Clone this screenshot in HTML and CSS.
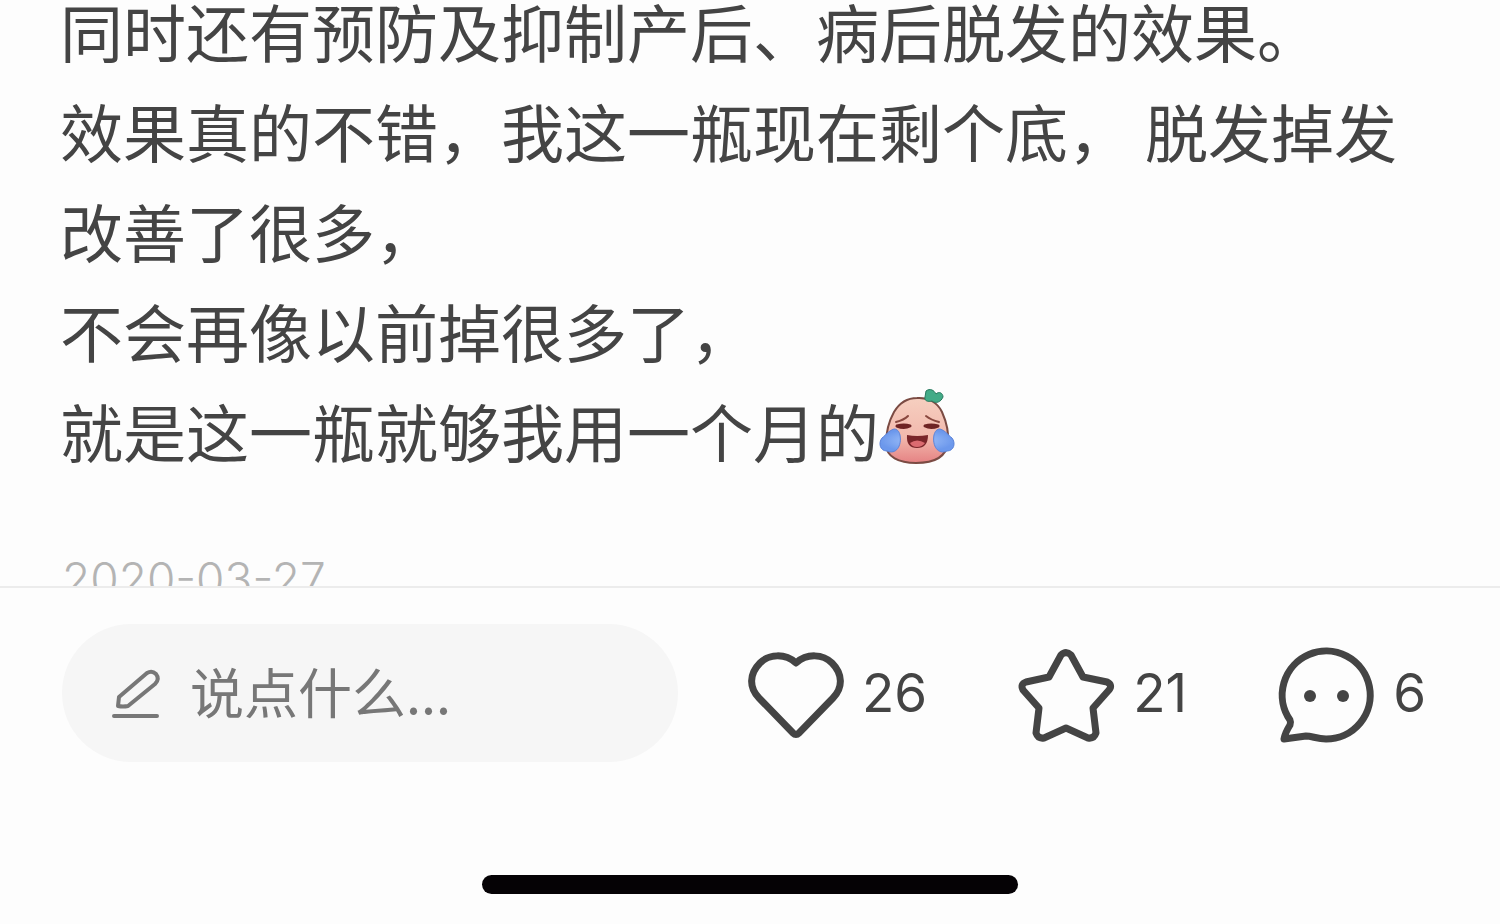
FILE: index.html
```html
<!DOCTYPE html>
<html lang="zh-CN">
<head>
    <meta charset="UTF-8">
    <meta name="viewport" content="width=device-width, initial-scale=1.0">
    <title>笔记详情</title>
    <link rel="stylesheet" href="styles.css">
</head>
<body>
    <main class="note">
        <div class="note-text">
            <p>同时还有预防及抑制产后、病后脱发的效果。</p>
            <p>效果真的不错，我这一瓶现在剩个底， 脱发掉发改善了很多，</p>
            <p>不会再像以前掉很多了，</p>
            <p>就是这一瓶就够我用一个月的<svg class="emoji" viewBox="0 0 76 76" role="img" aria-label="笑哭">
                <defs>
                    <linearGradient id="skin" x1="0" y1="0" x2="0" y2="1">
                        <stop offset="0" stop-color="#f6cfc0"/>
                        <stop offset="0.6" stop-color="#f2b9ad"/>
                        <stop offset="1" stop-color="#e58283"/>
                    </linearGradient>
                    <radialGradient id="tear">
                        <stop offset="0" stop-color="#a9c8fb"/>
                        <stop offset="1" stop-color="#6c98ec"/>
                    </radialGradient>
                </defs>
                <path d="M38 9C49 8 59 14 63 23C67 32 70 44 69 54C67 69 54 74 37 74C20 74 7 68 7 55C7 45 10 32 15 23C21 13 28 9 38 9Z" fill="url(#skin)" stroke="#7b4b43" stroke-width="2"/>
                <path d="M47 2C51-1 55 1 57 5C60 2 64 4 64 8C62 13 57 15 53 12C49 13 45 12 46 8Z" fill="#43ab87" stroke="#28785e" stroke-width="1"/>
                <path d="M17 33Q25 31 29 27M47 27Q52 31 60 33" fill="none" stroke="#89483f" stroke-width="2" stroke-linecap="round"/>
                <path d="M18 37Q25 35 31 37Q25 40 18 37ZM46 37Q52 35 59 37Q52 40 46 37Z" fill="#6e2424" stroke="#6e2424" stroke-width="3" stroke-linejoin="round"/>
                <path d="M28 46Q38 48 49 46Q49 59 38 59Q27 59 28 46Z" fill="#7a2529"/>
                <path d="M31 54Q38 49 46 54Q43 58 38 58Q33 58 31 54Z" fill="#db6b70"/>
                <path d="M15 40C9 42 7 46 3 49C-1 54 1 62 8 62C17 66 23 57 21 46C20 42 18 40 15 40ZM61 40C67 42 69 46 73 49C77 54 75 62 68 62C59 66 53 57 55 46C56 42 58 40 61 40Z" fill="url(#tear)" stroke="#5b83d8" stroke-width="1"/>
            </svg></p>
        </div>
        <time class="note-date" datetime="2020-03-27">2020-03-27</time>
    </main>

    <footer class="bottom-bar">
        <div class="toolbar">
            <label class="comment-box">
                <svg class="pen-icon" viewBox="0 0 48 50" aria-hidden="true">
                    <path d="M6 38L7 29L35 5Q40 2 44 6Q48 11 43 16L16 38Q11 39 6 38ZM2 48H45"/>
                </svg>
                <input type="text" placeholder="说点什么..." aria-label="说点什么">
            </label>
            <div class="actions">
                <button type="button" class="action" aria-label="点赞 26">
                    <svg class="action-icon" viewBox="0 0 96 96" aria-hidden="true">
                        <path d="M48 18C37 8 21 9 12 18C1 29 1 43 11 53L45 88Q48 91 51 88L85 53C95 43 95 29 84 18C75 9 59 8 48 18Z"/>
                    </svg>
                    <span>26</span>
                </button>
                <button type="button" class="action" aria-label="收藏 21">
                    <svg class="action-icon" viewBox="0 0 96 96" aria-hidden="true">
                        <path d="M42 10Q47 5 52 10L64 32L88 37Q94 40 90 45L74 63L77 88Q75 94 69 93L47 83L25 93Q19 94 17 88L20 63L4 45Q1 39 7 37L30 32Z"/>
                    </svg>
                    <span>21</span>
                </button>
                <button type="button" class="action" aria-label="评论 6">
                    <svg class="action-icon" viewBox="0 0 96 96" aria-hidden="true">
                        <path d="M11 75A44 44 0 1 1 47 94C38 94 33 91 27 91Q20 92 5 94Q6 88 11 80Q12 77 11 75Z"/>
                        <circle class="dot" cx="31" cy="51" r="6"/>
                        <circle class="dot" cx="64" cy="51" r="6"/>
                    </svg>
                    <span>6</span>
                </button>
            </div>
        </div>
        <div class="home-indicator"></div>
    </footer>
</body>
</html>
```

FILE: styles.css
```css
* {
    box-sizing: border-box;
}
body {
    display: flex;
    flex-direction: column;
    height: 100vh;
    margin: 0;
    overflow: hidden;
    background-color: #fdfdfd;
    color: #444;
    font-family: Inter, "Noto Sans CJK SC", sans-serif;
}

.note {
    flex: 1;
    min-height: 0;
    padding: 0 60px;
    overflow: hidden;
}
.note-text {
    margin-top: -20px;
    font-family: "Noto Sans CJK SC", sans-serif;
    font-size: 63px;
    line-height: 100px;
}
.note-text p {
    margin: 0;
}
.emoji {
    width: 76px;
    height: 76px;
    vertical-align: -8px;
}
.note-date {
    display: block;
    margin-top: 72px;
    padding-left: 2px;
    color: #b4b4b4;
    font-size: 46px;
    font-weight: 300;
    line-height: 54px;
}

/* Bottom bar */
.bottom-bar {
    padding-bottom: 30px;
    border-top: 2px solid #ececec;
}
.toolbar {
    display: flex;
    align-items: center;
    gap: 70px;
    padding: 36px 74px 0 62px;
}
.comment-box {
    display: flex;
    flex: 1;
    align-items: center;
    gap: 30px;
    min-width: 0;
    height: 138px;
    padding: 0 50px;
    border-radius: 69px;
    background-color: #f6f6f6;
}
.pen-icon {
    flex: none;
    width: 48px;
    height: 50px;
    overflow: visible;
    fill: none;
    stroke: #777;
    stroke-width: 4;
    stroke-linecap: round;
    stroke-linejoin: round;
}
.comment-box input {
    flex: 1;
    min-width: 0;
    height: 80px;
    padding: 0 0 6px;
    border: none;
    outline: none;
    background: none;
    color: #444;
    font-family: "Noto Sans CJK SC", sans-serif;
    font-size: 54px;
}
.comment-box input::placeholder {
    color: #777;
}
.actions {
    display: flex;
    gap: 92px;
}
.action {
    display: flex;
    align-items: center;
    gap: 18px;
    padding: 0;
    border: none;
    background: none;
    color: #444;
    font-family: inherit;
    font-size: 53px;
    line-height: 64px;
    cursor: pointer;
}
.action-icon {
    width: 96px;
    height: 96px;
    overflow: visible;
    fill: none;
    stroke: #444;
    stroke-width: 7;
    stroke-linejoin: round;
}
.action-icon .dot {
    fill: #444;
    stroke: none;
}
.home-indicator {
    width: 536px;
    max-width: 100%;
    height: 19px;
    margin: 113px auto 0;
    border-radius: 10px;
    background-color: #050205;
}
```
